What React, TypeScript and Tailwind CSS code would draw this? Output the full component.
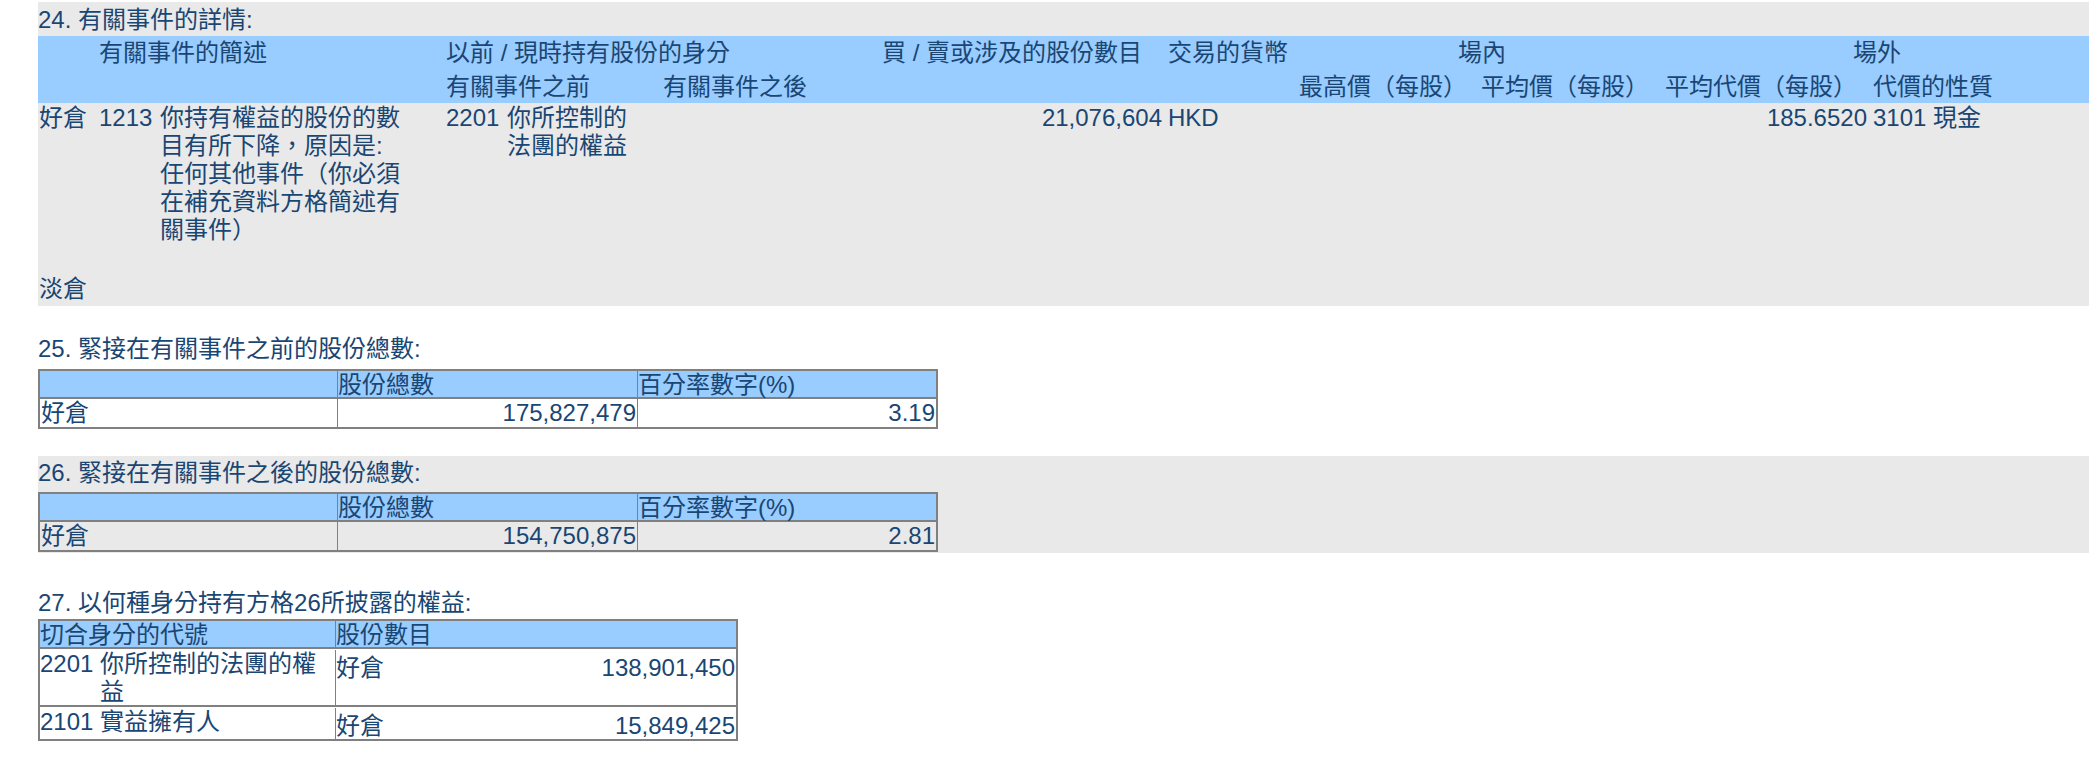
import React from 'react';

const grid24 =
  'grid grid-cols-[61px_347px_217px_219px_286px_131px_182px_184px_208px_216px]';

function Code({ code, lines, w }: { code: string; lines: string[]; w: string }) {
  return (
    <div className="flex">
      <span className="w-[61px] shrink-0">{code}</span>
      <div className={w}>
        {lines.map((l) => (
          <div key={l}>{l}</div>
        ))}
      </div>
    </div>
  );
}

function TotalTable({ shares, pct, rowBg }: { shares: string; pct: string; rowBg: string }) {
  return (
    <div className="w-[900px] border-2 border-[#808080]">
      <div className="grid grid-cols-[297px_300px_299px] bg-[#99ccff] border-b-2 border-[#808080] h-[28px]">
        <div />
        <div className="border-l border-[#808080]">股份總數</div>
        <div className="border-l border-[#808080]">百分率數字(%)</div>
      </div>
      <div className={`grid grid-cols-[297px_300px_299px] h-[28px] ${rowBg}`}>
        <div className="pl-[1px]">好倉</div>
        <div className="border-l border-[#808080] text-right pr-[1px]">{shares}</div>
        <div className="border-l border-[#808080] text-right pr-[1px]">{pct}</div>
      </div>
    </div>
  );
}

export default function App() {
  return (
    <div className="w-[2100px] min-h-[768px] bg-white pt-[2px] pl-[38px] text-[24px] leading-[28px] text-[#194673] font-['Liberation_Sans','Noto_Sans_CJK_TC',sans-serif]">
      {/* 24 */}
      <section className="w-[2051px] bg-[#e9e9e9] pt-[4px] pb-[3px]">
        <div>24. 有關事件的詳情:</div>
        <div className={`${grid24} grid-rows-[34px_33px] items-center bg-[#99ccff] mt-[2px]`}>
          <div className="col-start-2 row-start-1">有關事件的簡述</div>
          <div className="col-start-3 col-span-2 row-start-1">以前 / 現時持有股份的身分</div>
          <div className="col-start-5 row-start-1">買 / 賣或涉及的股份數目</div>
          <div className="col-start-6 row-start-1">交易的貨幣</div>
          <div className="col-start-7 col-span-2 row-start-1 text-center">場內</div>
          <div className="col-start-9 col-span-2 row-start-1 text-center">場外</div>
          <div className="col-start-3 row-start-2">有關事件之前</div>
          <div className="col-start-4 row-start-2">有關事件之後</div>
          <div className="col-start-7 row-start-2">最高價（每股）</div>
          <div className="col-start-8 row-start-2">平均價（每股）</div>
          <div className="col-start-9 row-start-2">平均代價（每股）</div>
          <div className="col-start-10 row-start-2">代價的性質</div>
        </div>
        <div className={`${grid24} grid-rows-[171px_28px] items-start pt-[1px]`}>
          <div className="pl-[1px]">好倉</div>
          <Code
            code="1213"
            w="w-[244px]"
            lines={['你持有權益的股份的數', '目有所下降，原因是:', '任何其他事件（你必須', '在補充資料方格簡述有', '關事件）']}
          />
          <Code code="2201" w="w-[130px]" lines={['你所控制的', '法團的權益']} />
          <div />
          <div className="text-right pr-[6px]">21,076,604</div>
          <div>HKD</div>
          <div />
          <div />
          <div className="text-right pr-[6px]">185.6520</div>
          <div>3101 現金</div>
          <div className="pl-[1px] row-start-2 col-start-1">淡倉</div>
        </div>
      </section>

      {/* 25 */}
      <section className="pt-[29px]">
        <div>25. 緊接在有關事件之前的股份總數:</div>
        <div className="mt-[6px]">
          <TotalTable shares="175,827,479" pct="3.19" rowBg="bg-white" />
        </div>
      </section>

      {/* 26 */}
      <section className="w-[2051px] bg-[#e9e9e9] mt-[27px] pt-[3px] pb-[1px]">
        <div>26. 緊接在有關事件之後的股份總數:</div>
        <div className="mt-[5px]">
          <TotalTable shares="154,750,875" pct="2.81" rowBg="" />
        </div>
      </section>

      {/* 27 */}
      <section className="pt-[36px]">
        <div>27. 以何種身分持有方格26所披露的權益:</div>
        <div className="mt-[2px] w-[700px] border-2 border-[#808080]">
          <div className="grid grid-cols-[295px_401px] bg-[#99ccff] border-b-2 border-[#808080] h-[28px]">
            <div>切合身分的代號</div>
            <div className="border-l border-[#808080]">股份數目</div>
          </div>
          <div className="grid grid-cols-[295px_401px] border-b-2 border-[#808080] pt-[1px] h-[58px]">
            <div className="flex">
              <span className="w-[60px] shrink-0">2201</span>
              <div className="w-[225px]">
                <div>你所控制的法團的權</div>
                <div>益</div>
              </div>
            </div>
            <div className="border-l border-[#808080] flex justify-between pr-[1px] pt-[4px]">
              <span>好倉</span>
              <span>138,901,450</span>
            </div>
          </div>
          <div className="grid grid-cols-[295px_401px] h-[32px] pt-[1px]">
            <div className="flex">
              <span className="w-[60px] shrink-0">2101</span>
              <span>實益擁有人</span>
            </div>
            <div className="border-l border-[#808080] flex justify-between pr-[1px] pt-[4px]">
              <span>好倉</span>
              <span>15,849,425</span>
            </div>
          </div>
        </div>
      </section>
    </div>
  );
}
